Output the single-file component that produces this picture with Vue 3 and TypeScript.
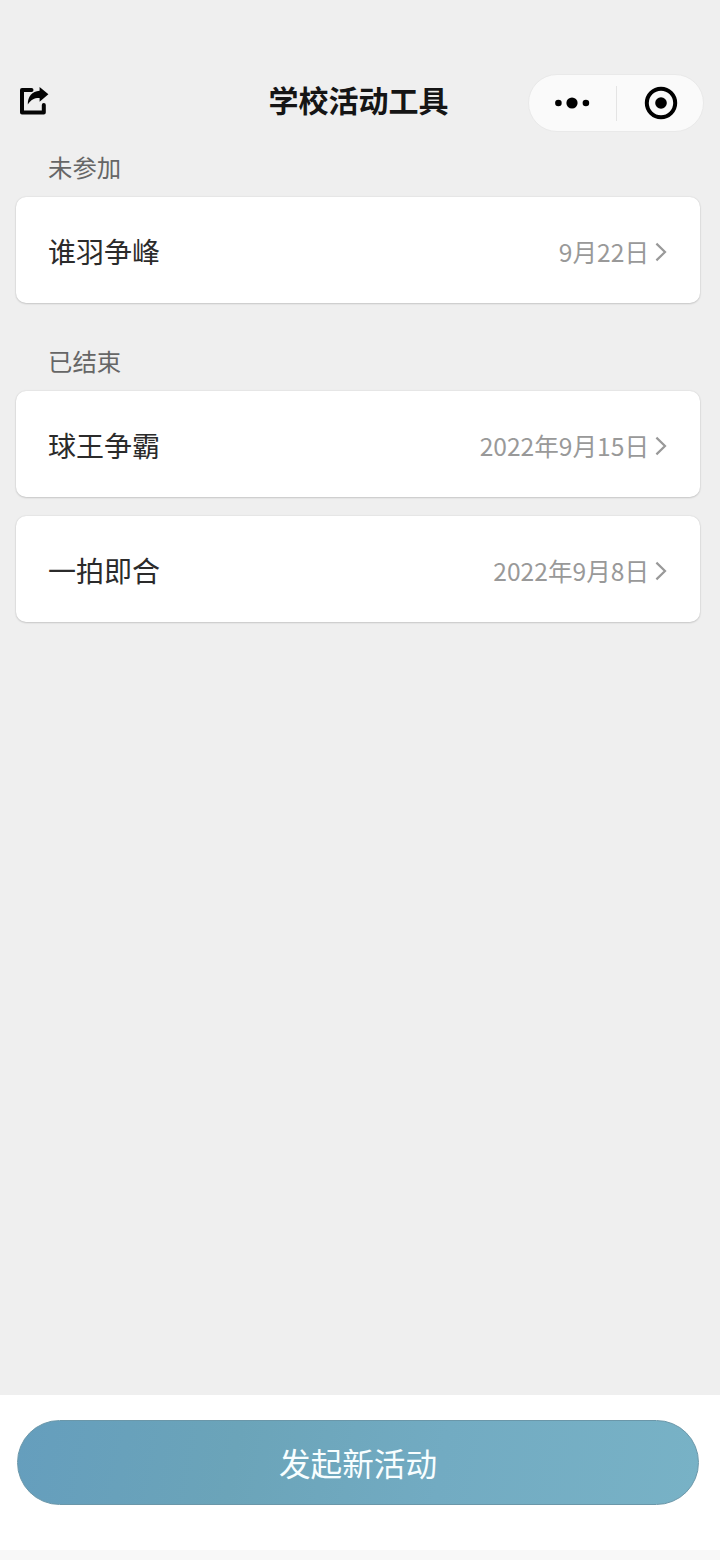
<script setup lang="ts">
interface Activity {
  name: string
  date: string
}

interface Section {
  label: string
  items: Activity[]
}

const sections: Section[] = [
  { label: '未参加', items: [{ name: '谁羽争峰', date: '9月22日' }] },
  {
    label: '已结束',
    items: [
      { name: '球王争霸', date: '2022年9月15日' },
      { name: '一拍即合', date: '2022年9月8日' },
    ],
  },
]
</script>

<template>
  <div class="page">
    <header class="nav">
      <svg class="share" viewBox="0 0 30 28" width="30" height="28">
        <path class="share-box" d="M12.5 2.9H3V25.4H24.8V18" />
        <path class="share-arrow" d="M20.6 0L29.4 7.3L20.6 14.8V11C15.5 10.8 12.3 12.4 8.8 17.4C8.8 9.2 13 4.2 20.6 3.7Z" />
      </svg>
      <h1 class="title">学校活动工具</h1>
      <div class="capsule">
        <svg class="more" viewBox="0 0 36 14" width="36" height="14">
          <circle cx="4.4" cy="7" r="3.3" />
          <circle cx="18" cy="7" r="5.6" />
          <circle cx="31.9" cy="7" r="3.3" />
        </svg>
        <span class="divider"></span>
        <svg class="target" viewBox="0 0 34 34" width="34" height="34">
          <circle class="ring" cx="17" cy="17" r="14.2" />
          <circle cx="17" cy="17" r="5.8" />
        </svg>
      </div>
    </header>

    <main class="content">
      <section v-for="section in sections" :key="section.label" class="section">
        <h2 class="label">{{ section.label }}</h2>
        <div class="cards">
          <article v-for="item in section.items" :key="item.name" class="card">
            <span class="name">{{ item.name }}</span>
            <span class="date">{{ item.date }}</span>
            <svg class="chevron" viewBox="0 0 12 20" width="12" height="20">
              <path d="M1.4 1.6L10 10L1.4 18.4" />
            </svg>
          </article>
        </div>
      </section>
    </main>

    <footer class="footer">
      <button class="create" type="button">发起新活动</button>
    </footer>
  </div>
</template>

<style>
body {
  margin: 0;
  background: #efefef;
}
</style>

<style scoped>
.page {
  display: flex;
  flex-direction: column;
  box-sizing: border-box;
  width: 720px;
  height: 1560px;
  overflow: hidden;
  background: #efefef;
  font-family: "Noto Sans CJK SC", "Noto Sans", sans-serif;
}

.nav {
  display: grid;
  grid-template-columns: 1fr 180px 1fr;
  align-items: center;
  height: 58px;
  padding: 74px 16px 0 19px;
}

.share {
  margin-top: -4px;
}

.share-box {
  fill: none;
  stroke: #050505;
  stroke-width: 4;
  stroke-linejoin: round;
  stroke-linecap: round;
}

.share-arrow {
  fill: #050505;
}

.title {
  margin: -8px 3px 0 -3px;
  color: #151515;
  font-size: 30px;
  font-weight: 700;
  line-height: 44px;
  white-space: nowrap;
}

.capsule {
  display: flex;
  align-items: center;
  justify-self: end;
  box-sizing: border-box;
  width: 176px;
  height: 58px;
  padding: 0 25px;
  border: 1px solid #e9e9e9;
  border-radius: 29px;
  background: #fafafa;
}

.divider {
  flex: none;
  width: 1px;
  height: 35px;
  margin: 0 27px 0 26px;
  background: #e4e4e4;
}

.more,
.target {
  flex: none;
}

.ring {
  fill: none;
  stroke: #000;
  stroke-width: 4;
}

.content {
  flex: 1;
  padding: 17px 20px 0 16px;
}

.section + .section {
  margin-top: 40px;
}

.label {
  margin: 0;
  padding: 0 32px 12px;
  color: #666;
  font-size: 24.4px;
  font-weight: 400;
  line-height: 36px;
}

.cards {
  display: flex;
  flex-direction: column;
  gap: 19px;
}

.card {
  display: flex;
  align-items: center;
  box-sizing: border-box;
  height: 106px;
  padding: 3px 33px 0 32px;
  border-radius: 10px;
  background: #fff;
  box-shadow: 0 0 2px rgba(0, 0, 0, 0.12), 0 1px 2px rgba(0, 0, 0, 0.14);
}

.name {
  flex: 1;
  padding-bottom: 2px;
  color: #2b2b2b;
  font-size: 28px;
}

.date {
  padding-bottom: 2px;
  color: #999;
  font-size: 24.6px;
}

.chevron {
  margin-left: 6px;
  fill: none;
  stroke: #999;
  stroke-width: 2.2;
}

.footer {
  box-sizing: border-box;
  height: 165px;
  padding: 25px 21px 0 17px;
  border-bottom: 10px solid #f8f8f8;
  background: #fff;
}

.create {
  display: block;
  box-sizing: border-box;
  width: 100%;
  height: 85px;
  padding: 0 0 2px;
  border: 1px solid #6b97a9;
  border-radius: 43px;
  background: linear-gradient(100deg, #659ebd 0%, #6ba4b9 32%, #72abc2 62%, #78b2c6 100%);
  color: #f8feff;
  font-family: inherit;
  font-size: 31.6px;
  line-height: 46px;
}
</style>
